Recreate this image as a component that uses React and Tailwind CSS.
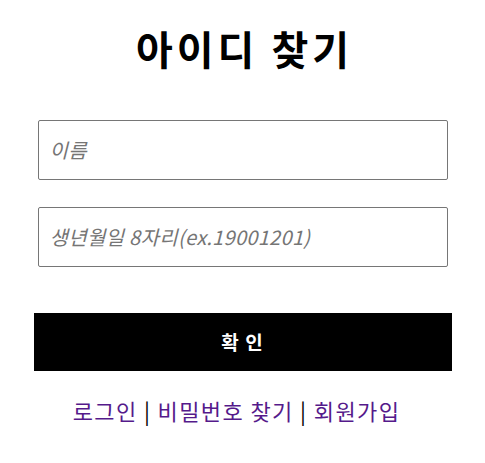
export default function App() {
  const font = { fontFamily: '"Noto Sans CJK KR", "Noto Sans", sans-serif' };
  return (
    <div className="w-[485px] h-[463px] bg-white flex flex-col items-center" style={font}>
      <h1 className="mt-[22px] pl-[4px] text-[40px] leading-[52px] font-bold text-black tracking-[4px]">아이디 찾기</h1>
      <div className="w-[418px] mt-[46px] flex flex-col items-center">
        <div className="w-[410px] h-[60px] border border-[#767676] rounded-[2px] flex items-center px-[11px]">
          <span className="italic text-[20px] text-[#757575] tracking-[0.3px]">이름</span>
        </div>
        <div className="w-[410px] h-[60px] mt-[27px] border border-[#767676] rounded-[2px] flex items-center px-[11px]">
          <span className="italic text-[20px] text-[#757575] tracking-[0.3px]">생년월일 8자리(ex.19001201)</span>
        </div>
        <button className="w-[418px] h-[58px] mt-[46px] bg-black text-white font-bold text-[19px] tracking-[1px] flex items-center justify-center">
          확 인
        </button>
        <div className="mt-[24px] text-[22px] leading-[30px] text-black pr-[12px] tracking-[1.4px]">
          <span className="text-[#551A8B]">로그인</span> | <span className="text-[#551A8B]">비밀번호 찾기</span> | <span className="text-[#551A8B]">회원가입</span>
        </div>
      </div>
    </div>
  );
}
